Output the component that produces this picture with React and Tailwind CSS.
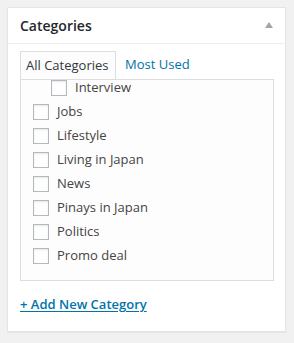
import React from "react";

const items = [
  { name: "Interview", child: true },
  { name: "Jobs" },
  { name: "Lifestyle" },
  { name: "Living in Japan" },
  { name: "News" },
  { name: "Pinays in Japan" },
  { name: "Politics" },
  { name: "Promo deal" },
];

function Checkbox() {
  return (
    <span className="block w-4 h-4 shrink-0 border border-[#b4b9be] bg-white shadow-[inset_0_1px_2px_rgba(0,0,0,0.1)]" />
  );
}

export default function App() {
  return (
    <div
      className="w-[294px] h-[343px] bg-[#f1f1f1] pt-[7px] pl-[7px]"
      style={{ fontFamily: '"Open Sans", "Noto Sans", sans-serif' }}
    >
      <div className="w-[279px] h-[325px] bg-white border border-[#e5e5e5] shadow-[0_1px_1px_rgba(0,0,0,0.04)]">
        {/* header */}
        <div className="h-[36px] border-b border-[#eeeeee] flex items-center justify-between pl-[12px] pr-[12px]">
          <h2 className="text-[14px] font-semibold text-[#23282d] leading-none">Categories</h2>
          <svg width="8" height="6" viewBox="0 0 8 6" className="mt-[-1px]">
            <path d="M4 0 L8 6 L0 6 Z" fill="#a0a5aa" />
          </svg>
        </div>

        <div className="pt-[8px] pl-[12px]">
          {/* tabs */}
          <div className="flex items-end h-[27px] text-[13px]">
            <div className="h-[28px] w-[96px] border border-b-0 border-[#dddddd] bg-[#fdfdfd] pl-[5px] flex items-center text-[#32373c] relative z-10">
              All Categories
            </div>
            <div className="h-[28px] pl-[9px] flex items-center text-[#0073aa]">Most Used</div>
          </div>

          {/* list */}
          <div className="w-[254px] h-[202px] border border-[#dddddd] bg-[#fdfdfd] overflow-hidden">
            <ul className="mt-[-4px] pl-[12px]">
              {items.map((it) => (
                <li
                  key={it.name}
                  className={`h-[24px] flex items-center gap-[8px] text-[13px] text-[#444444] ${it.child ? "pl-[18px]" : ""}`}
                >
                  <Checkbox />
                  <span>{it.name}</span>
                </li>
              ))}
            </ul>
          </div>

          <div className="mt-[10px]">
            <a className="text-[13px] font-semibold text-[#0073aa] underline underline-offset-[2px]">
              + Add New Category
            </a>
          </div>
        </div>
      </div>
    </div>
  );
}
